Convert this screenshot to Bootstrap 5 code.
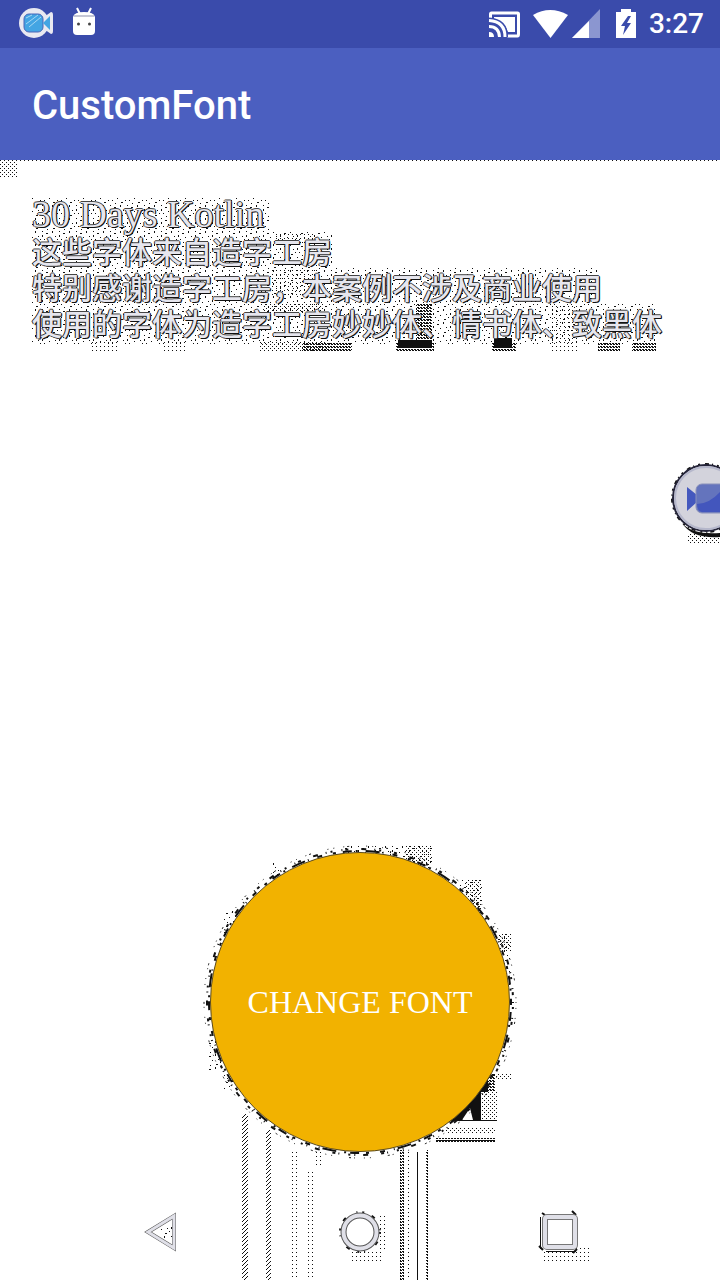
<!DOCTYPE html>
<html lang="zh-CN">
<head>
<meta charset="utf-8">
<meta name="viewport" content="width=device-width, initial-scale=1">
<title>CustomFont</title>
<link href="https://cdn.jsdelivr.net/npm/bootstrap@5.3.0/dist/css/bootstrap.min.css" rel="stylesheet">
<style>
  body { font-family: Roboto, "Noto Sans CJK SC", sans-serif; background: #fff; }
  .status-bar { background: #3a4bab; height: 48px; color: #fff; }
  .clock { font-size: 28px; line-height: 32px; font-weight: 500; }
  .app-bar { background: #4b5fc0; height: 112px; padding: 4px 32px 0; }
  .app-title { font-size: 40px; line-height: 48px; font-weight: 500; color: #fff; }
  .top-grain { height: 18px; }
  .sample-text {
    font-family: "Liberation Serif", "Noto Sans CJK SC", sans-serif;
    font-size: 30px; line-height: 36px; color: #e6e6ee; font-weight: 500;
    padding: 18px 16px 0 32px;
    text-shadow: 1px 1px #111, -1px 0 #222, 0 -1px #444, 1px 0 #222;
  }
  .sample-latin { font-size: 38px; line-height: 36px; }
  .text-grain { left: 24px; top: 18px; width: 640px; height: 180px; }
  .recorder { right: 0; top: 302px; }
  .round-area { width: 300px; height: 300px; margin-bottom: 32px; }
  .round-btn {
    width: 300px; height: 300px; border-radius: 50%; background: #f2b200;
    border: 1px solid #5b4a1c; color: #fff; padding: 0;
    font-family: "Liberation Serif", serif; font-size: 32px; line-height: 48px;
  }
  .round-grain { left: -20px; top: -20px; pointer-events: none; }
  .nav-strip { height: 96px; padding: 0 60px; }
  .nav-strip button { background: none; border: 0; padding: 0; }
</style>
</head>
<body>
<svg width="0" height="0" class="position-absolute" aria-hidden="true">
  <defs>
    <pattern id="dots" width="4" height="4" patternUnits="userSpaceOnUse"><path d="M0 0h1v1H0zM2 2h1v1H2z" fill="#111"/></pattern>
    <pattern id="sparse" width="4" height="4" patternUnits="userSpaceOnUse"><path d="M0 0h1v1H0z" fill="#111"/></pattern>
    <pattern id="dense" width="3" height="3" patternUnits="userSpaceOnUse"><path d="M0 0h2v1H0zM1 1h2v1H1z" fill="#111"/></pattern>
    <pattern id="slant" width="4" height="4" patternUnits="userSpaceOnUse"><path d="M3 0h1v1H3zM2 1h1v1H2zM1 2h1v1H1zM0 3h1v1H0z" fill="#111"/></pattern>
    <pattern id="speck" width="17" height="13" patternUnits="userSpaceOnUse"><path d="M1 1h1v1H1zM5 3h2v1H5zM11 1h1v2h-1zM14 6h1v1h-1zM8 7h1v1H8zM3 9h1v1H3zM12 11h2v1h-2zM6 12h1v1H6zM16 9h1v1h-1zM1 5h1v2H1z" fill="#111"/></pattern>
  </defs>
</svg>
<div class="d-flex flex-column min-vh-100 overflow-hidden">
  <header>
    <div class="status-bar d-flex align-items-center justify-content-between">
      <svg width="120" height="48" viewBox="0 0 120 48" aria-hidden="true">
        <path d="M44 17l7-5q2 0 2 3v16q0 3-2 3l-7-5z" fill="#e9e9f1"/>
        <circle cx="34" cy="23" r="15" fill="#e9e9f1"/>
        <rect x="24" y="14" width="19" height="18" rx="5" fill="#43a5e3" stroke="#4a66b8"/>
        <path d="M43 23l7-7v14z" fill="#43a5e3"/>
        <path d="M26 18l6-3M26 24l12-9M29 27l12-10" stroke="#a5d8f4"/>
        <path d="M77 8l3 6M91 8l-3 6" stroke="#fff" stroke-width="2"/>
        <path d="M73 17q1-5 11-5t11 5v14q0 4-4 4H77q-4 0-4-4z" fill="#fff"/>
        <path d="M74 16h20" stroke="#c5c7d5" stroke-width="2"/>
        <circle cx="78.500" cy="24" r="1.500" fill="#444"/><circle cx="89.500" cy="24" r="1.500" fill="#444"/>
      </svg>
      <div class="d-flex align-items-center">
        <svg width="160" height="48" viewBox="480 0 160 48" aria-hidden="true">
          <path d="M489.500 18v-4q0-1 1-1h26q1 0 1 1v20q0 2-1 2h-10" fill="none" stroke="#fff" stroke-width="3"/>
          <path d="M493 17h21v15h-7q-3-10-14-13z" fill="#fff"/>
          <path d="M488 20.500q16 1 16 16.500M488 26.500q10 0 10.500 10.500" fill="none" stroke="#3a4bab" stroke-width="6"/>
          <path d="M488 20.500q16 1 16 16.500M488 26.500q10 0 10.500 10.500" fill="none" stroke="#fff" stroke-width="3"/>
          <path d="M488 32q5 0 5 5h-5z" fill="#fff"/>
          <path d="M532 15q17-10 35 0l-17.500 23z" fill="#fff"/>
          <path d="M571 38L599 9v29z" fill="#8b96d0"/><path d="M571 38l17-17v17z" fill="#fff"/>
          <path d="M620 9h10v3h5v26h-20V12h5z" fill="#fff"/>
          <path d="M627 16l-7 10h4l-2 9 8-12h-4l4-7z" fill="#3a4bab"/>
        </svg>
        <span class="clock px-2 me-2">3:27</span>
      </div>
    </div>
    <div class="app-bar d-flex align-items-center">
      <h1 class="app-title mb-0">CustomFont</h1>
    </div>
  </header>
  <main class="flex-grow-1 d-flex flex-column position-relative">
    <svg class="top-grain d-block w-100" aria-hidden="true">
      <rect width="17" height="18" fill="url(#dots)"/><rect width="100%" height="2" fill="url(#dots)"/>
    </svg>
    <svg class="text-grain position-absolute" viewBox="0 0 640 180" aria-hidden="true">
      <path d="M8 20h238v34H8zM8 54h300v36H8zM8 90h566v36H8zM8 126h624v40H8z" fill="url(#speck)"/>
      <path d="M68 162h26v12H68zM138 164h24v10h-24zM525 126h28v48h-28zM250 54h42v14h-42zM246 92h48v28h-48z" fill="url(#sparse)"/>
      <path d="M240 126h60v10h-60zM236 164h68v9h-68z" fill="url(#dots)"/>
      <path d="M278 164h50v10h-50zM372 164h38v10h-38zM392 126h16v38h-16zM468 164h24v10h-24zM574 164h22v10h-22zM608 164h24v10h-24z" fill="url(#dense)"/>
      <path d="M374 162h34v8h-34zM470 160h18v10h-18z" fill="#111"/>
    </svg>
    <p class="sample-text mb-0 position-relative"><span class="sample-latin">30 Days Kotlin</span><br>这些字体来自造字工房<br>特别感谢造字工房，本案例不涉及商业使用<br>使用的字体为造字工房妙妙体、情书体、致黑体</p>
    <button type="button" class="recorder position-absolute border-0 bg-transparent p-0" aria-label="Recorder">
      <svg class="d-block" width="50" height="84" viewBox="670 462 50 84">
        <path d="M688 534h32v10h-32z" fill="url(#dots)"/>
        <circle cx="706" cy="498" r="34" fill="none" stroke="#111" stroke-width="2" stroke-dasharray="2 5 4 3 1 4"/>
        <path d="M682 523q10 12 38 10v4q-28 2-38-14z" fill="#111"/>
        <circle cx="706" cy="498" r="33" fill="#d3d3dc" stroke="#25253a" stroke-width="2"/>
        <circle cx="706" cy="498" r="31" fill="none" stroke="#b5b7cb" stroke-width="2"/>
        <path d="M687 487l10 8v7l-10 9z" fill="#4458be"/>
        <rect x="696" y="484" width="34" height="29" rx="6" fill="#6474bd" stroke="#8990bb"/>
        <path d="M697 504q12 0 23-12v20h-18q-5-1-5-8z" fill="#4356bd"/>
      </svg>
    </button>
    <div class="round-area position-relative mt-auto mx-auto">
      <svg class="round-grain position-absolute" width="340" height="448" viewBox="190 832 340 448" aria-hidden="true">
        <path d="M242 1114h6v166h-6zM266 1130h5v150h-5z" fill="url(#slant)"/>
        <path d="M290 1152h8v128h-8zM305 1170h8v110h-8zM314 1152h8v16h-8zM407 1152h2v128h-2zM422 1152h2v128h-2z" fill="url(#sparse)"/>
        <path d="M400 1150h4v130h-4zM426 1150h2v130h-2z" fill="url(#dense)"/>
        <path d="M417.500 1152v128" stroke="#111"/>
        <path d="M345 846h88v22h-88zM460 880h22v38h-22zM494 934h16v58h-16zM224 910h20v34h-20zM272 862h8v20h-8zM208 1040h14v32h-14zM224 1070h10v20h-10z" fill="url(#speck)"/>
        <path d="M406 846h26v20h-26zM465 880h17v36h-17zM500 934h12v18h-12zM482 1090h15v30h-15zM445 1128h50v6h-50zM490 1074h22v6h-22z" fill="url(#dots)"/>
        <path d="M486 1074h9v18h-9z" fill="url(#dense)"/>
        <path d="M470 1074h18v18h-7v28h-8l-3-12-8 12h-16z" fill="#111"/>
        <path d="M440 1120.500h57M436 1140.500h59" stroke="#111"/><path d="M436 1138h59v5h-59z" fill="url(#dense)"/>
        <circle cx="360" cy="1002" r="151" fill="none" stroke="#111" stroke-width="2" stroke-dasharray="3 7 9 4 2 8 14 3 1 9 5 11"/>
        <circle cx="360" cy="1002" r="153" fill="none" stroke="#111" stroke-width="2" stroke-dasharray="1 4 2 9 1 3 3 13 5 8"/>
        <circle cx="360" cy="1002" r="156" fill="none" stroke="#111" stroke-width="1" stroke-dasharray="1 5 1 9 1 3 2 17"/>
      </svg>
      <button type="button" class="round-btn position-relative">CHANGE FONT</button>
    </div>
  </main>
  <nav class="nav-strip row g-0 align-items-center" aria-label="System">
    <div class="col-4 d-flex justify-content-center"><button type="button" aria-label="Back">
      <svg class="d-block" width="40" height="44" viewBox="140 1210 40 44"><path d="M148 1232l26-16v32z" fill="none" stroke="#555" stroke-width="4"/><path d="M148 1232l26-16v32z" fill="none" stroke="#e0e0e8" stroke-width="3"/><path d="M160 1225h12v14h-12z" fill="url(#speck)"/></svg>
    </button></div>
    <div class="col-4 d-flex justify-content-center"><button type="button" aria-label="Home">
      <svg class="d-block" width="52" height="60" viewBox="334 1202 52 60"><path d="M352 1252h30v12h-30zM380 1216h5v36h-5z" fill="url(#sparse)"/><circle cx="360" cy="1232" r="20" fill="none" stroke="#111" stroke-width="2" stroke-dasharray="2 8 4 12 1 5"/><circle cx="360" cy="1232" r="16.500" fill="none" stroke="#555" stroke-width="6"/><circle cx="360" cy="1232" r="16.500" fill="none" stroke="#e0e0e8" stroke-width="4"/></svg>
    </button></div>
    <div class="col-4 d-flex justify-content-center"><button type="button" aria-label="Recent apps">
      <svg class="d-block" width="64" height="64" viewBox="528 1200 64 64"><path d="M544 1248h46v16h-46z" fill="url(#sparse)"/><path d="M540.500 1217v32M546 1251.500h30" stroke="#111"/><path d="M572 1211l4 4M539 1246l4 4M573 1253l4-4M542 1213l3 2" stroke="#111" stroke-width="2"/><rect x="545" y="1217" width="30" height="30" rx="2" fill="none" stroke="#777" stroke-width="6"/><rect x="545" y="1217" width="30" height="30" rx="2" fill="none" stroke="#e0e0e8" stroke-width="4"/></svg>
    </button></div>
  </nav>
</div>
<script src="https://cdn.jsdelivr.net/npm/bootstrap@5.3.0/dist/js/bootstrap.bundle.min.js"></script>
</body>
</html>
